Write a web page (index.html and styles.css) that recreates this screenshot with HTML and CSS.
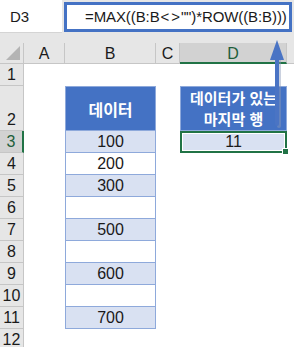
FILE: index.html
```html
<!DOCTYPE html>
<html lang="ko">
<head>
  <meta charset="UTF-8" />
  <title>MAX ROW</title>
  <link rel="stylesheet" href="styles.css">
</head>
<body>
  <div class="app">
    <div class="formula-bar">
      <div class="name-box">D3</div>
      <div class="formula">=MAX((B:B<span class="op">&lt;</span><span class="op">&gt;</span>"")*ROW((B:B)))</div>
    </div>

    <div class="sheet">
      <div class="corner"><span class="tri"></span></div>
      <div class="col-head">A</div>
      <div class="col-head">B</div>
      <div class="col-head">C</div>
      <div class="col-head active">D</div>
      <div class="col-head rest"></div>

      <div class="row-head">1</div>
      <div class="cell"></div><div class="cell"></div><div class="cell"></div><div class="cell"></div><div class="cell"></div>

      <div class="row-head tall">2</div>
      <div class="cell"></div>
      <div class="cell th first">데이터</div>
      <div class="cell"></div>
      <div class="cell th first two-line">데이터가 있는<br>마지막 행</div>
      <div class="cell"></div>

      <div class="row-head active">3</div>
      <div class="cell"></div>
      <div class="cell td band">100</div>
      <div class="cell"></div>
      <div class="cell td band selected">11<span class="handle"></span></div>
      <div class="cell"></div>

      <div class="row-head">4</div>
      <div class="cell"></div><div class="cell td">200</div><div class="cell"></div><div class="cell"></div><div class="cell"></div>

      <div class="row-head">5</div>
      <div class="cell"></div><div class="cell td band">300</div><div class="cell"></div><div class="cell"></div><div class="cell"></div>

      <div class="row-head">6</div>
      <div class="cell"></div><div class="cell td"></div><div class="cell"></div><div class="cell"></div><div class="cell"></div>

      <div class="row-head">7</div>
      <div class="cell"></div><div class="cell td band">500</div><div class="cell"></div><div class="cell"></div><div class="cell"></div>

      <div class="row-head">8</div>
      <div class="cell"></div><div class="cell td"></div><div class="cell"></div><div class="cell"></div><div class="cell"></div>

      <div class="row-head">9</div>
      <div class="cell"></div><div class="cell td band">600</div><div class="cell"></div><div class="cell"></div><div class="cell"></div>

      <div class="row-head">10</div>
      <div class="cell"></div><div class="cell td"></div><div class="cell"></div><div class="cell"></div><div class="cell"></div>

      <div class="row-head">11</div>
      <div class="cell"></div><div class="cell td band">700</div><div class="cell"></div><div class="cell"></div><div class="cell"></div>

      <div class="row-head">12</div>
      <div class="cell"></div><div class="cell"></div><div class="cell"></div><div class="cell"></div><div class="cell"></div>
    </div>

    <!-- arrow from D3 up to the formula bar -->
    <svg class="arrow" width="20" height="96" viewBox="0 0 20 96">
      <rect x="9" y="20" width="4" height="70" rx="2" fill="#8a9ab8" opacity="0.45"/>
      <rect x="7" y="18" width="4" height="70" rx="2" fill="#4a74c4"/>
      <polygon points="9,2 16,22 2,22" fill="#4a74c4"/>
    </svg>
  </div>
</body>
</html>
```

FILE: styles.css
```css
:root {
  --chrome: #e6e6e6;
  --head-line: #c6c6c6;
  --accent: #4472c4;
  --band: #d9e1f2;
  --table-line: #8ea9db;
  --green: #217346;
  --text: #1a1a1a;
}

body {
  margin: 0;
  font-family: "Liberation Sans", "Noto Sans CJK KR", sans-serif;
  color: var(--text);
  background: #fff;
}

.app {
  position: relative;
  width: 294px;
  height: 347px;
  overflow: hidden;
  background: var(--chrome);
}

.formula-bar {
  display: flex;
  gap: 2px;
  height: 43px;
  align-items: flex-start;
}

.name-box {
  width: 62px;
  height: 33px;
  padding-left: 10px;
  background: #fff;
  border-bottom: 1px solid #d4d4d4;
  box-sizing: border-box;
  font-size: 15px;
  line-height: 33px;
}

.formula {
  width: 228px;
  height: 30px;
  margin-top: 2px;
  border: 3px solid var(--accent);
  background: #fff;
  box-sizing: border-box;
  padding-left: 18px;
  font-size: 15px;
  line-height: 24px;
  letter-spacing: -0.1px;
  white-space: nowrap;
  overflow: hidden;
}

.op {
  margin: 0 1px;
}

.sheet {
  display: grid;
  grid-template-columns: 24px 41px 91px 24px 107px 1fr;
  grid-template-rows: 21px 22px 45px repeat(10, 22px);
  background: #fff;
}

.corner {
  position: relative;
  background: var(--chrome);
  border-right: 1px solid var(--head-line);
  border-bottom: 1px solid var(--head-line);
}

.tri {
  position: absolute;
  right: 3px;
  bottom: 3px;
  width: 0;
  height: 0;
  border-left: 14px solid transparent;
  border-bottom: 14px solid #b4b4b4;
}

.col-head {
  background: var(--chrome);
  border-right: 1px solid var(--head-line);
  border-bottom: 1px solid var(--head-line);
  font-size: 16px;
  text-align: center;
  line-height: 21px;
}

.col-head.active {
  background: #d2d2d2;
  border-bottom: 2px solid var(--green);
  color: #1e5e3a;
}

.col-head.rest {
  border-right: none;
}

.row-head {
  background: var(--chrome);
  border-right: 1px solid var(--head-line);
  border-bottom: 1px solid var(--head-line);
  font-size: 16px;
  text-align: center;
  display: flex;
  align-items: center;
  justify-content: center;
}

.row-head.tall {
  align-items: flex-end;
  padding-bottom: 1px;
}

.row-head.active {
  background: #d2d2d2;
  border-right: 2px solid var(--green);
  color: #1e5e3a;
}

.cell {
  font-size: 16px;
  text-align: center;
  display: flex;
  align-items: center;
  justify-content: center;
}

.th {
  background: var(--accent);
  color: #fff;
  font-weight: bold;
  border: 1px solid var(--table-line);
  font-size: 16px;
}

.two-line {
  font-size: 15px;
  line-height: 21px;
}

.td {
  border: 1px solid var(--table-line);
  border-top: none;
}

.band {
  background: var(--band);
}

.selected {
  position: relative;
  border: 2px solid var(--green);
  box-shadow: inset 0 0 0 1px #fff;
}

.handle {
  position: absolute;
  right: -4px;
  bottom: -4px;
  width: 5px;
  height: 5px;
  background: var(--green);
  border: 1px solid #fff;
}

.arrow {
  position: absolute;
  left: 268px;
  top: 38px;
}
```
